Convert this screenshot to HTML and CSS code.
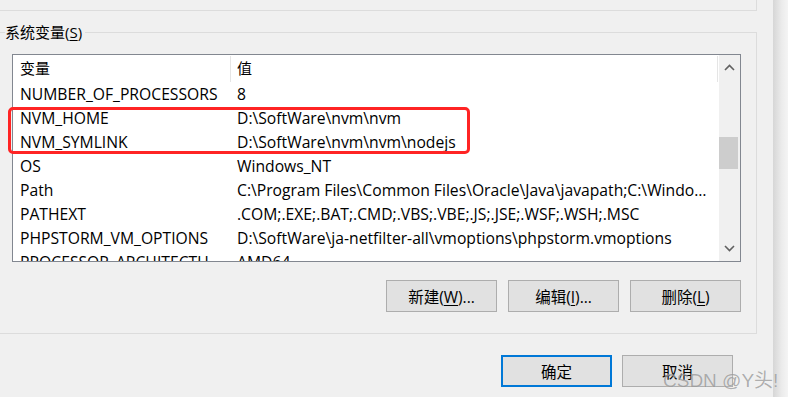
FILE: index.html
```html
<!DOCTYPE html>
<html>
<head>
	<meta charset="utf-8">
	<title>环境变量</title>
	<link rel="stylesheet" href="styles.css">
</head>
<body>
<div class="screen">
	<div class="window">
		<div class="topbox"></div>

		<fieldset class="group">
			<legend>系统变量(<u>S</u>)</legend>

			<div class="listbox">
				<div class="list">
					<div class="list-head">
						<div class="cell">变量</div>
						<div class="cell">值</div>
					</div>
					<div class="row"><div class="cell">NUMBER_OF_PROCESSORS</div><div class="cell">8</div></div>
					<div class="row"><div class="cell">NVM_HOME</div><div class="cell">D:\SoftWare\nvm\nvm</div></div>
					<div class="row"><div class="cell">NVM_SYMLINK</div><div class="cell">D:\SoftWare\nvm\nvm\nodejs</div></div>
					<div class="row"><div class="cell">OS</div><div class="cell">Windows_NT</div></div>
					<div class="row"><div class="cell">Path</div><div class="cell">C:\Program Files\Common Files\Oracle\Java\javapath;C:\Windows\system32;C:\Windows</div></div>
					<div class="row"><div class="cell">PATHEXT</div><div class="cell">.COM;.EXE;.BAT;.CMD;.VBS;.VBE;.JS;.JSE;.WSF;.WSH;.MSC</div></div>
					<div class="row"><div class="cell">PHPSTORM_VM_OPTIONS</div><div class="cell">D:\SoftWare\ja-netfilter-all\vmoptions\phpstorm.vmoptions</div></div>
					<div class="row"><div class="cell">PROCESSOR_ARCHITECTURE</div><div class="cell">AMD64</div></div>
				</div>
				<div class="scrollbar">
					<div class="sb-btn">
						<svg width="11" height="7" viewBox="0 0 11 7"><polyline points="1,6 5.5,1.5 10,6" fill="none" stroke="#606060" stroke-width="1.6"/></svg>
					</div>
					<div class="sb-track"><div class="sb-thumb"></div></div>
					<div class="sb-btn">
						<svg width="11" height="7" viewBox="0 0 11 7"><polyline points="1,1 5.5,5.5 10,1" fill="none" stroke="#606060" stroke-width="1.6"/></svg>
					</div>
				</div>
			</div>

			<div class="actions">
				<button class="btn">新建(<u>W</u>)...</button>
				<button class="btn">编辑(<u>I</u>)...</button>
				<button class="btn">删除(<u>L</u>)</button>
			</div>
		</fieldset>

		<div class="dialog-actions">
			<button class="btn primary">确定</button>
			<button class="btn">取消</button>
		</div>

		<div class="highlight"></div>
	</div>
	<div class="shadow"></div>
	<div class="watermark">CSDN @Y头!</div>
</div>
</body>
</html>
```

FILE: styles.css
```css
body {margin: 0; background: #f0f0f0; font-family: "Open Sans", "Noto Sans CJK SC", sans-serif; color: #000;}
.screen {display: flex; width: 788px; height: 397px; overflow: hidden; position: relative;}
.window {width: 773px; background: #f0f0f0; position: relative;}
.shadow {flex: 1; background: linear-gradient(to right, #d6d6d6, #ececec 60%, #f4f4f4);}

.topbox {width: 757px; height: 11px; box-sizing: border-box; border-bottom: 1px solid #dcdcdc; border-right: 1px solid #dcdcdc;}

.group {width: 757px; box-sizing: border-box; margin: 11px 0 0 0; padding: 0 0 21px 0;
		border: 1px solid #dcdcdc; border-left: none; min-inline-size: 0;}
.group legend {margin-left: 5px; padding: 0 3px 0 0; font-size: 15px; line-height: 20px; height: 20px;}
.group legend u, .btn u {text-underline-offset: 2px;}

.listbox {display: flex; width: 729px; height: 208px; box-sizing: border-box; margin: 12px 0 0 12px;
		border: 1px solid #828790; background: #fff;}
.list {flex: 1; overflow: hidden; font-size: 15.7px;}
.list-head, .row {display: grid; grid-template-columns: 218px 1fr;}
.list-head {height: 27px; line-height: 27px; padding-right: 1px;}
.list-head .cell {font-size: 15px; margin: 1px 0 0 0; line-height: 25px;}
.list-head .cell:first-child {border-right: 1px solid #e5e5e5;}
.list-head .cell:last-child {border-right: 1px solid #e5e5e5;}
.row {height: 24px; line-height: 23px; padding-top: 1px; box-sizing: border-box;}
.cell {padding-left: 7px; white-space: nowrap; overflow: hidden; text-overflow: ellipsis; padding-right: 8px;}
.cell + .cell {padding-left: 6px;}

.scrollbar {width: 21px; display: flex; flex-direction: column; background: #f0f0f0;}
.sb-btn {height: 25px; display: flex; align-items: center; justify-content: center;}
.sb-track {flex: 1; padding-top: 57px;}
.sb-thumb {height: 32px; width: 19px; background: #cdcdcd;}

.actions {display: flex; justify-content: flex-end; gap: 11px; margin-top: 18px; padding-right: 15px;}
.dialog-actions {display: flex; justify-content: flex-end; gap: 10px; margin-top: 21px; padding-right: 40px;}
.btn {width: 111px; height: 32px; box-sizing: border-box; background: #e1e1e1; border: 1px solid #adadad;
		font-family: "Open Sans", "Noto Sans CJK SC", sans-serif; font-size: 15.5px; color: #000; padding: 0;}
.btn.primary {border: 2px solid #0078d7;}

.highlight {position: absolute; left: 8px; top: 107px; width: 462px; height: 47px; box-sizing: border-box;
		border: 3px solid #ff2424; border-radius: 5px;}
.watermark {position: absolute; left: 663px; top: 365px; font-family: "Liberation Sans", "Noto Sans CJK SC", sans-serif;
		font-size: 19px; color: rgba(110,110,110,0.55); white-space: nowrap; text-shadow: 0 0 1px rgba(255,255,255,0.6);}
```
